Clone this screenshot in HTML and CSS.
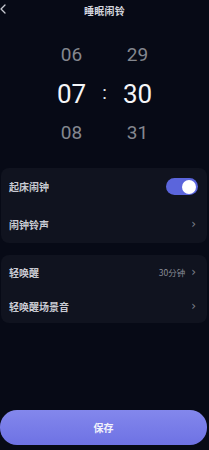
FILE: index.html
```html
<!DOCTYPE html>
<html lang="zh">
<head>
<meta charset="utf-8">
<link rel="stylesheet" href="styles.css">
</head>
<body>
<div class="page">
  <header class="header">
    <svg class="back" viewBox="0 0 6 10" width="6" height="10"><path d="M5 1 L1 5 L5 9" fill="none" stroke="#c8cad2" stroke-width="1.3" stroke-linecap="round" stroke-linejoin="round"/></svg>
    <div class="title">睡眠闹铃</div>
  </header>
  <section class="picker">
    <div class="col">
      <div class="num dim">06</div>
      <div class="num big">07</div>
      <div class="num dim">08</div>
    </div>
    <div class="colon">:</div>
    <div class="col">
      <div class="num dim">29</div>
      <div class="num big">30</div>
      <div class="num dim">31</div>
    </div>
  </section>
  <section class="card card1">
    <div class="row r1">
      <span class="label">起床闹钟</span>
      <span class="toggle"><span class="knob"></span></span>
    </div>
    <div class="row r1">
      <span class="label">闹钟铃声</span>
      <span class="chev">›</span>
    </div>
  </section>
  <section class="card card2">
    <div class="row r2">
      <span class="label">轻唤醒</span>
      <span class="right"><span class="value">30分钟</span><span class="chev">›</span></span>
    </div>
    <div class="row r2">
      <span class="label">轻唤醒场景音</span>
      <span class="chev">›</span>
    </div>
  </section>
  <div class="spacer"></div>
  <button class="save">保存</button>
</div>
</body>
</html>
```
FILE: styles.css
```css
* { box-sizing: border-box; }
html, body { margin: 0; padding: 0; background: #070a16; }
body { font-family: "Noto Sans CJK SC", "Noto Sans", sans-serif; }
.page {
  width: 209px;
  height: 450px;
  display: flex;
  flex-direction: column;
  background: #070a16;
  color: #d6d8e0;
}
.header {
  height: 20px;
  position: relative;
  display: flex;
  align-items: center;
  justify-content: center;
}
.back { position: absolute; left: 0; top: 4px; }
.title { font-size: 10px; font-weight: 700; color: #d4d6de; letter-spacing: 0.3px; }
.picker {
  margin-top: 15px;
  display: flex;
  justify-content: center;
  align-items: center;
  font-family: Roboto, "Noto Sans", sans-serif;
}
.col { width: 40px; display: flex; flex-direction: column; align-items: center; }
.num { height: 39px; display: flex; align-items: center; justify-content: center; line-height: 1; }
.dim { font-size: 19px; color: #84878f; font-weight: 400; }
.big { font-size: 26px; color: #f4f5f8; font-weight: 400; }
.colon { width: 26px; text-align: center; font-size: 19px; color: #e8e9ee; margin-top: -3px; font-weight: 400; }
.card {
  margin: 0 2px 0 1px;
  background: #10131f;
  border-radius: 8px;
  padding: 0 11px 0 8px;
}
.card1 { margin-top: 16px; }
.card2 { margin-top: 12px; }
.row { display: flex; align-items: center; justify-content: space-between; }
.r1 { height: 37.5px; }
.r2 { height: 34px; }
.label { font-size: 10px; font-weight: 700; color: #c9cbd3; }
.chev { font-size: 12px; color: #7d808a; line-height: 1; font-family: "DejaVu Sans", sans-serif; }
.right { display: flex; align-items: center; gap: 6px; }
.value { font-size: 8.5px; color: #8a8d97; }
.toggle {
  width: 32px; height: 17px;
  border-radius: 9px;
  background: #5b65dc;
  position: relative;
  margin-right: -2px;
}
.knob {
  position: absolute;
  right: 2px; top: 1.5px;
  width: 14px; height: 14px;
  border-radius: 50%;
  background: #ffffff;
}
.spacer { flex: 1; }
.save {
  margin: 0 2px 5px 0;
  height: 35px;
  border: none;
  border-radius: 17px;
  background: linear-gradient(180deg, #8387ec 0%, #6e72e4 100%);
  color: #f2f2fb;
  font-family: "Noto Sans CJK SC", sans-serif;
  font-size: 10px;
  font-weight: 700;
}
```
